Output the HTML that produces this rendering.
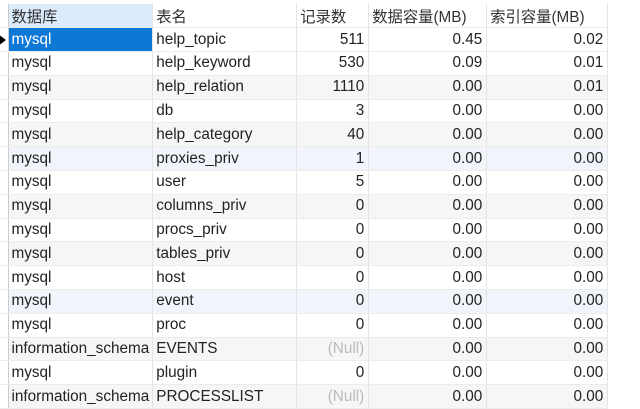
<!DOCTYPE html><html><head><style>
body{margin:0;width:640px;height:408px;background:#fff;overflow:hidden;font-family:"Liberation Sans","Noto Sans CJK SC",sans-serif;font-size:15.3px;color:#222}
table{position:absolute;left:0;top:4px;border-collapse:collapse;table-layout:fixed}
td{height:23.8px;padding:0 3px;border-right:1px solid #e4e4e4;border-bottom:1px solid #ececec;white-space:nowrap;overflow:hidden;box-sizing:border-box}
td.g{padding:0;border-right:1px solid #ccc;background:#fff}
tr.h td{color:#333}
tr.h td.c1{background:#dcebfb}
td.r{text-align:right;padding-right:4px}
tr.s td.c1{background:#0e78d6;color:#fff}
tr.a td:not(.g){background:#f6f6f6}
tr.b td:not(.g){background:#f1f5fb}
.n{color:#bbb}
</style></head><body>
<table>
<colgroup><col style="width:8px"><col style="width:143px"><col style="width:144px"><col style="width:72px"><col style="width:118px"><col style="width:121px"></colgroup>
<tr class="h"><td class="g"></td><td class="c1">数据库</td><td>表名</td><td>记录数</td><td>数据容量(MB)</td><td>索引容量(MB)</td></tr>
<tr class="s"><td class="g" style="position:relative"><span style="position:absolute;left:-2px;top:6px;width:0;height:0;border-top:6px solid transparent;border-bottom:6px solid transparent;border-left:8px solid #000"></span></td><td class="c1">mysql</td><td>help_topic</td><td class="r">511</td><td class="r">0.45</td><td class="r">0.02</td></tr>
<tr><td class="g"></td><td>mysql</td><td>help_keyword</td><td class="r">530</td><td class="r">0.09</td><td class="r">0.01</td></tr>
<tr class="a"><td class="g"></td><td>mysql</td><td>help_relation</td><td class="r">1110</td><td class="r">0.00</td><td class="r">0.01</td></tr>
<tr><td class="g"></td><td>mysql</td><td>db</td><td class="r">3</td><td class="r">0.00</td><td class="r">0.00</td></tr>
<tr class="a"><td class="g"></td><td>mysql</td><td>help_category</td><td class="r">40</td><td class="r">0.00</td><td class="r">0.00</td></tr>
<tr class="b"><td class="g"></td><td>mysql</td><td>proxies_priv</td><td class="r">1</td><td class="r">0.00</td><td class="r">0.00</td></tr>
<tr><td class="g"></td><td>mysql</td><td>user</td><td class="r">5</td><td class="r">0.00</td><td class="r">0.00</td></tr>
<tr class="a"><td class="g"></td><td>mysql</td><td>columns_priv</td><td class="r">0</td><td class="r">0.00</td><td class="r">0.00</td></tr>
<tr><td class="g"></td><td>mysql</td><td>procs_priv</td><td class="r">0</td><td class="r">0.00</td><td class="r">0.00</td></tr>
<tr class="a"><td class="g"></td><td>mysql</td><td>tables_priv</td><td class="r">0</td><td class="r">0.00</td><td class="r">0.00</td></tr>
<tr><td class="g"></td><td>mysql</td><td>host</td><td class="r">0</td><td class="r">0.00</td><td class="r">0.00</td></tr>
<tr class="b"><td class="g"></td><td>mysql</td><td>event</td><td class="r">0</td><td class="r">0.00</td><td class="r">0.00</td></tr>
<tr><td class="g"></td><td>mysql</td><td>proc</td><td class="r">0</td><td class="r">0.00</td><td class="r">0.00</td></tr>
<tr class="a"><td class="g"></td><td>information_schema</td><td>EVENTS</td><td class="r n">(Null)</td><td class="r">0.00</td><td class="r">0.00</td></tr>
<tr><td class="g"></td><td>mysql</td><td>plugin</td><td class="r">0</td><td class="r">0.00</td><td class="r">0.00</td></tr>
<tr class="a"><td class="g"></td><td>information_schema</td><td>PROCESSLIST</td><td class="r n">(Null)</td><td class="r">0.00</td><td class="r">0.00</td></tr>
</table>
</body></html>
